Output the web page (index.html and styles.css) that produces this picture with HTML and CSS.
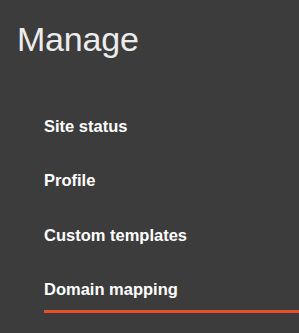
FILE: index.html
```html
<!DOCTYPE html>
<html>
<head>
<meta charset="utf-8">
<title>Manage</title>
<link rel="stylesheet" href="styles.css">
</head>
<body>
<h1>Manage</h1>
<nav>
    <a href="#">Site status</a>
    <a href="#">Profile</a>
    <a href="#">Custom templates</a>
    <a href="#" class="active">Domain mapping</a>
</nav>
</body>
</html>
```

FILE: styles.css
```css
body {
    margin: 0;
    background: #3c3c3c;
    font-family: "Liberation Sans", Arial, sans-serif;
    height: 333px;
}

h1 {
    margin: 0;
    padding: 19px 0 0 17px;
    font-size: 34px;
    line-height: 40px;
    font-weight: normal;
    color: #ececec;
    letter-spacing: -0.2px;
}

nav {
    display: flex;
    flex-direction: column;
    gap: 20.5px;
    margin: 56.5px 0 0 44px;
}

nav a {
    display: block;
    color: #fff;
    text-decoration: none;
    font-size: 16.5px;
    font-weight: bold;
    line-height: 20px;
    padding-bottom: 11px;
    border-bottom: 3px solid transparent;
}

nav a.active {
    border-bottom-color: #e6502a;
}
```
